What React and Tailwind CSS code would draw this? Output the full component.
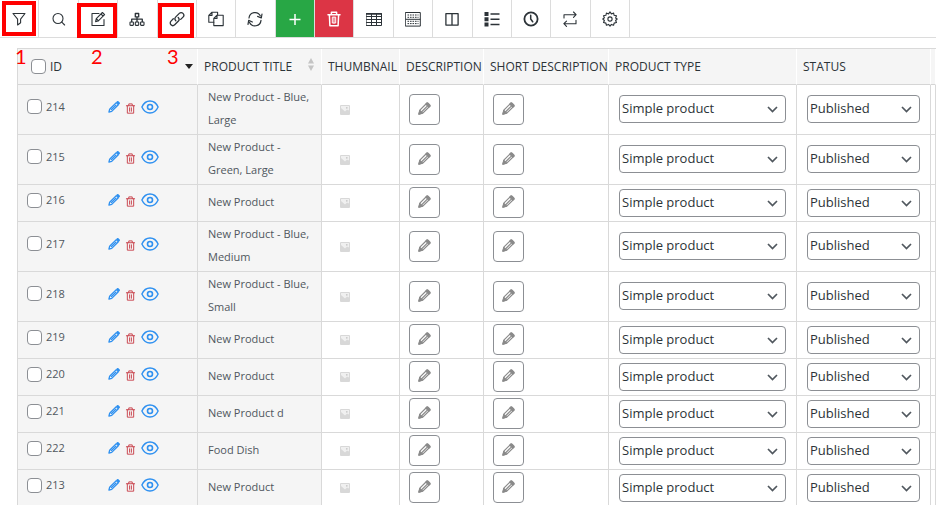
import React, { useState } from 'react'

const products = [
  { id: 214, title: 'New Product - Blue, Large', tall: true },
  { id: 215, title: 'New Product - Green, Large', tall: true },
  { id: 216, title: 'New Product' },
  { id: 217, title: 'New Product - Blue, Medium', tall: true },
  { id: 218, title: 'New Product - Blue, Small', tall: true },
  { id: 219, title: 'New Product' },
  { id: 220, title: 'New Product' },
  { id: 221, title: 'New Product d' },
  { id: 222, title: 'Food Dish' },
  { id: 213, title: 'New Product' },
]

function Icon({ size = 16, width = 1.1, className = '', children }) {
  return (
    <svg
      width={size}
      height={size}
      viewBox="0 0 16 16"
      fill="none"
      stroke="currentColor"
      strokeWidth={width}
      strokeLinejoin="round"
      strokeLinecap="round"
      className={className}
      aria-hidden="true"
    >
      {children}
    </svg>
  )
}

const tools = [
  { name: 'Filter', icon: <Icon><path d="M2 2.5h12L9.6 8.2v3.6L6.6 14V8.2z" /></Icon> },
  { name: 'Search', icon: <Icon><circle cx="7" cy="7.5" r="5" /><path d="M10.8 11.2l2.8 2.8" /></Icon> },
  {
    name: 'Bulk edit',
    icon: (
      <Icon>
        <path d="M9 2.5H2v12h12v-6" />
        <path d="M5.6 10.6l.7-3L12.4 1.5l2.2 2.2-6 6zM11 3l2.1 2.1M6.3 7.7l2.2 2.2" />
      </Icon>
    ),
  },
  {
    name: 'Variations',
    icon: (
      <Icon>
        <path d="M6.3 2.5h3.4v3.4H6.3zM8 5.9v4.8M2.7 10.7V8.2h10.6v2.5" strokeWidth="1.3" />
        <rect x="1" y="11" width="3.4" height="3.4" rx=".6" />
        <rect x="6.3" y="11" width="3.4" height="3.4" rx=".6" />
        <rect x="11.6" y="11" width="3.4" height="3.4" rx=".6" />
      </Icon>
    ),
  },
  {
    name: 'Bind editing',
    icon: (
      <Icon width={1.3}>
        <path d="M6.8 9.7a2.7 2.7 0 0 1 0-3.8l3.5-3.5a2.6 2.6 0 0 1 3.7 3.7l-2.3 2.3" />
        <path d="M9.2 6.5a2.7 2.7 0 0 1 0 3.8l-3.5 3.5a2.6 2.6 0 0 1-3.7-3.7l2.3-2.3" />
      </Icon>
    ),
  },
  {
    name: 'Duplicate',
    icon: (
      <Icon>
        <path d="M5.8 11.3H.8V4.4L4 1.2h5.6v2.8M4 1.2v3.2H.8" />
        <path d="M9 4.2h6.2v10.4H5.8V7.4zM9 4.2v3.2H5.8" />
      </Icon>
    ),
  },
  {
    name: 'Reload',
    icon: (
      <Icon width={1.2}>
        <path d="M2 7a6 6 0 0 1 11.4-2M14 9.4a6 6 0 0 1-11.4 2" />
        <path d="M15 3l-.7 4-3.7-1.6M1 13.4l.7-4 3.7 1.6" />
      </Icon>
    ),
  },
  { name: 'New product', tone: 'green', icon: <Icon width={1.5}><path d="M8 3v11M2.5 8.5h11" strokeLinecap="butt" /></Icon> },
  {
    name: 'Delete',
    tone: 'red',
    icon: (
      <Icon width={1.5}>
        <path d="M2 3.7h12M5.4 3.5V1.2h5.2v2.3M3.4 4l.5 10.8h8.2L12.6 4" />
        <path d="M6.3 6.5v5.5h3.4V6.5zM8 6.5V12" strokeWidth="1" />
      </Icon>
    ),
  },
  {
    name: 'Columns settings',
    icon: (
      <Icon width={1}>
        <path d="M.5 2.5h15v12H.5zM.5 5.5h15M.5 8.5h15M.5 11.5h15M5.5 2.5v12M10.5 2.5v12" />
        <path d="M.5 3h15" strokeWidth="1.6" />
      </Icon>
    ),
  },
  {
    name: 'Meta fields',
    icon: (
      <Icon width={1}>
        <path d="M.7 1.5h14.6v13.6H.7z" />
        <path d="M2.5 4h11M2.5 6.3h11M2.5 10.3h11M2.5 12.6h11" strokeDasharray="1.6 .9" strokeLinecap="butt" />
        <path d="M1 8.3h14" />
      </Icon>
    ),
  },
  { name: 'Profiles', icon: <Icon width={1.3}><path d="M1.9 2.7h12.2v11.4H1.9zM8 2.7v11.4" /></Icon> },
  {
    name: 'Options',
    icon: (
      <Icon width={1.5}>
        <path d="M6.5 3h9M6.5 8.2h9M6.5 13.4h9" strokeLinecap="butt" />
        <path d="M.5 1h4v4h-4zM.5 6.2h4v4h-4zM.5 11.4h4v4h-4z" fill="currentColor" stroke="none" />
      </Icon>
    ),
  },
  { name: 'History', icon: <Icon width={1.8}><circle cx="8" cy="8" r="6.6" /><path d="M7.7 4.3V8l2 2.8" strokeWidth="1.5" /></Icon> },
  {
    name: 'Export and import',
    icon: (
      <Icon>
        <path d="M2 7V3.7h12M11.5 1l2.6 2.7-2.6 2.6" />
        <path d="M14 9.2v3.5H2M4.5 10.1l-2.6 2.6 2.6 2.7" />
      </Icon>
    ),
  },
  {
    name: 'Settings',
    icon: (
      <Icon>
        <circle cx="8" cy="8" r="2.1" />
        <path d="M8 .9l1.4 2 2.2-.9.5 2.3 2.4.6-.9 2.1 1.6 1-1.6 1.5.9 2-2.4.6-.5 2.2-2.2-.9L8 15.1l-1.4-1.7-2.2.9-.5-2.2-2.4-.6.9-2L.8 8l1.6-1.2-.9-2 2.4-.5L4.4 2l2.2.9z" />
      </Icon>
    ),
  },
]

function toneClass(tone) {
  if (tone === 'green') return 'bg-[#28a745] text-white'
  if (tone === 'red') return 'bg-[#dc3545] text-white'
  return 'bg-white text-[#2c3338]'
}

function Toolbar() {
  return (
    <div className="border-b border-[#dcdcdc]">
      <div className="flex h-[37px] max-w-[630px]">
        {tools.map(t => (
          <button
            key={t.name}
            title={t.name}
            aria-label={t.name}
            className={`flex flex-1 items-center justify-center border-r border-[#dcdcdc] ${toneClass(t.tone)}`}
          >
            {t.icon}
          </button>
        ))}
      </div>
    </div>
  )
}

// red frames and numbers drawn over the toolbar
function Marks() {
  const num = "absolute top-[44px] font-['Lato',sans-serif] text-xl leading-6 text-[#ff0000]"
  return (
    <div className="pointer-events-none">
      <div className="absolute left-[2px] top-[1px] h-[35px] w-[34px] border-4 border-[#ff0000]"></div>
      <div className="absolute left-[77px] top-[3px] h-[35px] w-10 border-4 border-[#ff0000]"></div>
      <div className="absolute left-[158px] top-[3px] h-[35px] w-9 border-4 border-[#ff0000]"></div>
      <span className={`${num} left-[15px]`}>1</span>
      <span className={`${num} left-[91px]`}>2</span>
      <span className={`${num} left-[167px]`}>3</span>
    </div>
  )
}

function Check(props) {
  return (
    <input
      type="checkbox"
      className="h-[15px] w-[15px] shrink-0 appearance-none rounded-[4px] border border-[#8c8f94] bg-white checked:bg-[#2e90f0]"
      {...props}
    />
  )
}

function Select({ label, options }) {
  return (
    <div className="relative">
      <select
        aria-label={label}
        className="block h-7 w-full appearance-none rounded-[4px] border border-[#8c8f94] bg-white pl-[2px] pr-6 text-[13px] text-[#2c3338]"
      >
        {options.map(o => <option key={o}>{o}</option>)}
      </select>
      <svg className="pointer-events-none absolute right-2 top-[9px]" width="11" height="11" viewBox="0 0 11 11" fill="none" stroke="#50575e" strokeWidth="1.7" aria-hidden="true">
        <path d="M1 3l4.5 4.5L10 3" />
      </svg>
    </div>
  )
}

function EditButton({ label }) {
  return (
    <button aria-label={label} className="flex h-[31px] w-[31px] items-center justify-center rounded-[4px] border border-[#8c8f94] bg-white pb-[2px] text-[#8a8a8a]">
      <Icon size={15} width={1.3}>
        <path d="M2 14l1-4.2 7.4-7.4a1 1 0 0 1 1.4 0l1.8 1.8a1 1 0 0 1 0 1.4L6.2 13zM5 11.5L11 5.5" />
        <path d="M9.4 3.4l3.2 3.2 1.3-1.3-3.2-3.2zM3.2 10.2l2.6 2.6L2 14z" fill="currentColor" />
      </Icon>
    </button>
  )
}

function RowActions() {
  return (
    <div className="flex items-center">
      <a href="#edit" aria-label="Edit" className="mr-[5px] text-[#2e90f0]">
        <Icon size={12} width={1.7}>
          <path d="M1.2 14.8l1-3.8L11 2.2 13.8 5 5 13.8zM4.5 11.5l6-6" />
          <path d="M12 1.5L13.2.8l2 2-.8 1.2z" fill="currentColor" />
        </Icon>
      </a>
      <a href="#delete" aria-label="Delete" className="mr-[5px] pt-[3px] text-[#c9444d]">
        <Icon size={11} width={1.4}>
          <path d="M2 4h12M5.5 3.8V1.3h5v2.5M3.4 4.2v10.6h9.2V4.2M6.7 7v5M9.3 7v5" />
        </Icon>
      </a>
      <a href="#view" aria-label="View" className="text-[#2e90f0]">
        <svg width="18" height="14" viewBox="0 0 18 14" fill="none" stroke="currentColor" strokeWidth="1.4" aria-hidden="true">
          <path d="M.9 7C4.5-1 13.5-1 17.1 7 13.5 15 4.5 15 .9 7z" />
          <circle cx="9" cy="7" r="2.5" strokeWidth="1.6" />
        </svg>
      </a>
    </div>
  )
}

function Thumb() {
  return (
    <svg width="10" height="10" viewBox="0 0 10 10" role="img" aria-label="No image">
      <rect width="10" height="10" rx="1" fill="#d8d8d8" />
      <path d="M1 1h8v4.5L7 4.5 5 6.5 1 3z" fill="#f0f0f0" />
      <circle cx="6.8" cy="2.8" r=".9" fill="#c8c8c8" />
    </svg>
  )
}

const th = 'border-b border-r border-b-[#d5d5d5] border-r-white bg-[#f5f5f5] pl-[6px] text-left text-xs font-normal whitespace-nowrap'
const td = 'border-b border-r border-[#d9d9d9]'

export default function App() {
  const [selected, setSelected] = useState([])

  function toggle(id) {
    setSelected(selected.includes(id) ? selected.filter(x => x !== id) : [...selected, id])
  }

  const allSelected = selected.length === products.length

  return (
    <div className="relative h-screen overflow-hidden bg-white font-['Open_Sans',sans-serif] text-[#2c3338]">
      <Toolbar />
      <div className="mt-[10px] pl-[17px]">
        <table className="w-full table-fixed border-separate border-spacing-0 border-l border-t border-[#d9d9d9]">
          <colgroup>
            <col className="w-[180px]" />
            <col className="w-[124px]" />
            <col className="w-[78px]" />
            <col className="w-[84px]" />
            <col className="w-[125px]" />
            <col className="w-[188px]" />
            <col className="w-[134px]" />
            <col />
          </colgroup>
          <thead>
            <tr className="h-9">
              <th className={th}>
                <div className="flex items-center pl-[7px] pr-1">
                  <Check
                    aria-label="Select all"
                    checked={allSelected}
                    onChange={() => setSelected(allSelected ? [] : products.map(p => p.id))}
                  />
                  <span className="ml-1 flex-1">ID</span>
                  <svg width="8" height="5" viewBox="0 0 8 5" aria-hidden="true"><path d="M0 0h8L4 5z" fill="#222" /></svg>
                </div>
              </th>
              <th className={th}>
                <div className="flex items-center justify-between pr-[7px]">
                  <span>PRODUCT TITLE</span>
                  <svg width="6" height="13" viewBox="0 0 6 13" className="mb-1" aria-hidden="true">
                    <path d="M0 5.5L3 0l3 5.5zM0 7.5L3 13l3-5.5z" fill="#c4c4c4" />
                  </svg>
                </div>
              </th>
              <th className={th}>THUMBNAIL</th>
              <th className={th}>DESCRIPTION</th>
              <th className={th}>SHORT DESCRIPTION</th>
              <th className={th}>PRODUCT TYPE</th>
              <th className={th}>STATUS</th>
              <th className={th}></th>
            </tr>
          </thead>
          <tbody>
            {products.map(p => (
              <tr key={p.id} className={p.tall ? 'h-[50px]' : 'h-[37px]'}>
                <td className={`${td} bg-[#f5f5f5] pb-[6px] pl-[9px]`}>
                  <div className="flex items-center">
                    <label className="flex w-[81px] items-center gap-1 text-[11px] leading-4 text-[#50575e]">
                      <Check checked={selected.includes(p.id)} onChange={() => toggle(p.id)} />
                      {p.id}
                    </label>
                    <RowActions />
                  </div>
                </td>
                <td className={`${td} bg-[#f5f5f5] pb-[3px] pl-[10px] pr-[10px] text-[11px] leading-[23px] text-[#50575e]`}>{p.title}</td>
                <td className={`${td} pl-[18px]`}><Thumb /></td>
                <td className={`${td} pb-px pl-[9px]`}><EditButton label="Edit description" /></td>
                <td className={`${td} pb-px pl-[9px]`}><EditButton label="Edit short description" /></td>
                <td className={`${td} px-[10px] pb-px`}>
                  <Select label="Product type" options={['Simple product', 'Variable product', 'Grouped product']} />
                </td>
                <td className={`${td} px-[10px] pb-px`}>
                  <Select label="Status" options={['Published', 'Draft', 'Private']} />
                </td>
                <td className={td}></td>
              </tr>
            ))}
          </tbody>
        </table>
      </div>
      <Marks />
    </div>
  )
}
